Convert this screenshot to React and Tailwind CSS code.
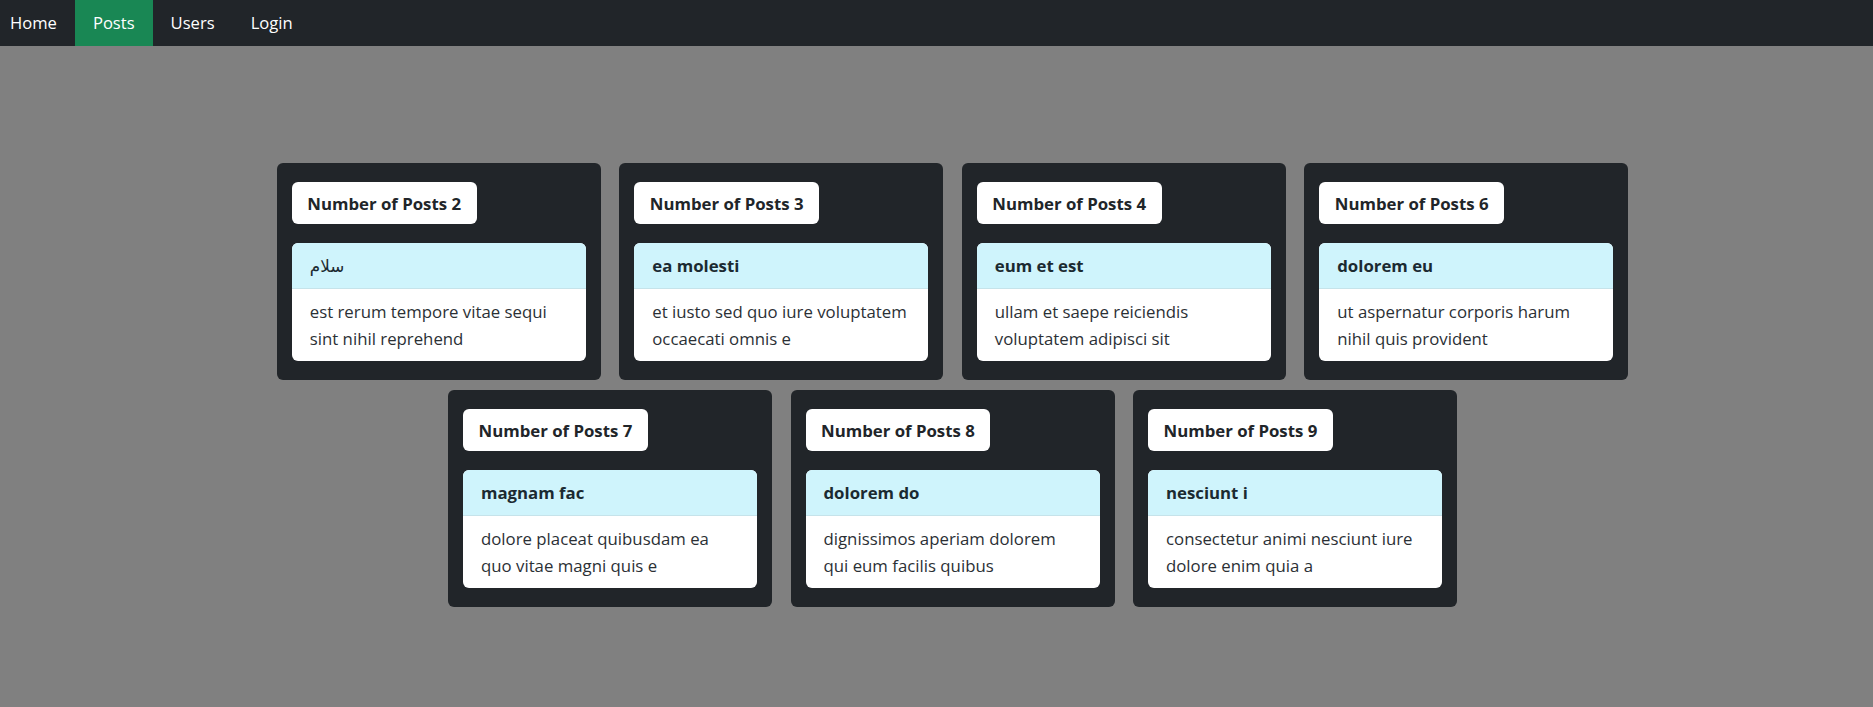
import React from 'react';

const posts = [
  { count: 2, title: 'سلام', lines: ['est rerum tempore vitae sequi', 'sint nihil reprehend'], rtl: true },
  { count: 3, title: 'ea molesti', lines: ['et iusto sed quo iure voluptatem', 'occaecati omnis e'] },
  { count: 4, title: 'eum et est', lines: ['ullam et saepe reiciendis', 'voluptatem adipisci sit'] },
  { count: 6, title: 'dolorem eu', lines: ['ut aspernatur corporis harum', 'nihil quis provident'] },
  { count: 7, title: 'magnam fac', lines: ['dolore placeat quibusdam ea', 'quo vitae magni quis e'] },
  { count: 8, title: 'dolorem do', lines: ['dignissimos aperiam dolorem', 'qui eum facilis quibus'] },
  { count: 9, title: 'nesciunt i', lines: ['consectetur animi nesciunt iure', 'dolore enim quia a'] },
];

const links = ['Home', 'Posts', 'Users', 'Login'];

function Navbar() {
  return (
    <nav className="bg-[#212529] h-[46px] flex items-stretch">
      <ul className="flex items-stretch -ml-[8px]">
        {links.map((l) => (
          <li key={l}>
            <a
              href="#"
              className={
                'h-full flex items-center px-[18px] text-[16.6px] text-white ' +
                (l === 'Posts' ? 'bg-[#198754]' : '')
              }
            >
              {l}
            </a>
          </li>
        ))}
      </ul>
    </nav>
  );
}

function PostCard({ post }) {
  return (
    <div className="w-[324px] bg-[#212529] rounded-[6px] px-[15px] py-[19px]">
      <div className="inline-block bg-white rounded-[6px] px-[15.5px] py-[7.5px] text-[16.8px] leading-[27px] font-bold text-[#212529]">
        Number of Posts {post.count}
      </div>
      <ul className="mt-[19px] rounded-[6px] overflow-hidden bg-white">
        <li
          className={
            'bg-[#cff4fc] px-[18px] py-[9px] text-[16.8px] leading-[27px] text-[#1b2a31] border-b border-[#c6e3ea] ' +
            (post.rtl ? 'font-normal' : 'font-bold')
          }
        >
          {post.title}
        </li>
        <li className="px-[18px] py-[9px] text-[16.8px] leading-[27px] text-[#2b3035]">
          {post.lines.map((line) => (
            <span key={line} className="block whitespace-nowrap">
              {line}
            </span>
          ))}
        </li>
      </ul>
    </div>
  );
}

export default function App() {
  return (
    <div
      className="min-h-[707px] bg-[#808080]"
      style={{ fontFamily: '"Open Sans", "DejaVu Sans", sans-serif' }}
    >
      <Navbar />
      <div className="pt-[117px] pl-[32px] flex flex-wrap justify-center gap-x-[18.5px] gap-y-[10px] max-w-[1420px] mx-auto">
        {posts.map((p) => (
          <PostCard key={p.count} post={p} />
        ))}
      </div>
    </div>
  );
}
